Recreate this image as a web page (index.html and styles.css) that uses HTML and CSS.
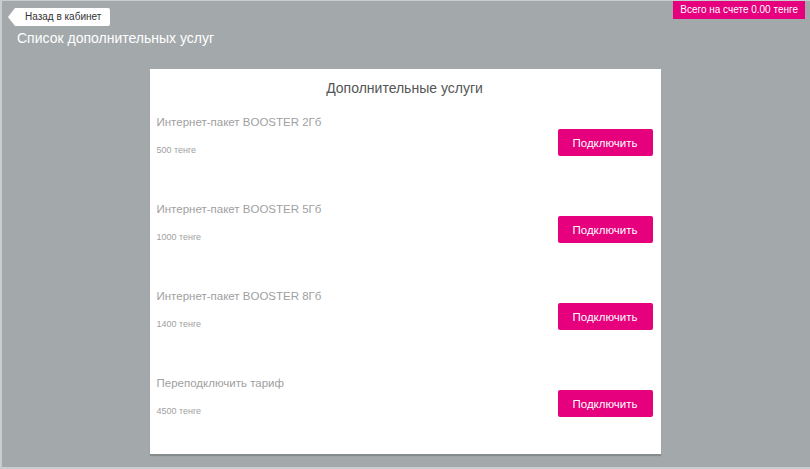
FILE: index.html
```html
<!DOCTYPE html>
<html lang="ru">
<head>
<meta charset="utf-8">
<title>Дополнительные услуги</title>
<link rel="stylesheet" href="styles.css">
</head>
<body>
<div class="frame">
  <header class="topbar">
    <div class="topbar-left">
      <a class="back-btn" href="#">Назад в кабинет</a>
      <h1 class="page-title">Список дополнительных услуг</h1>
    </div>
    <div class="balance">Всего на счете 0.00 тенге</div>
  </header>
  <main class="card">
    <h2 class="card-title">Дополнительные услуги</h2>
    <div class="rows">
      <div class="row">
        <div class="info">
          <div class="name">Интернет-пакет BOOSTER 2Гб</div>
          <div class="price">500 тенге</div>
        </div>
        <button class="connect">Подключить</button>
      </div>
      <div class="row">
        <div class="info">
          <div class="name">Интернет-пакет BOOSTER 5Гб</div>
          <div class="price">1000 тенге</div>
        </div>
        <button class="connect">Подключить</button>
      </div>
      <div class="row">
        <div class="info">
          <div class="name">Интернет-пакет BOOSTER 8Гб</div>
          <div class="price">1400 тенге</div>
        </div>
        <button class="connect">Подключить</button>
      </div>
      <div class="row">
        <div class="info">
          <div class="name">Переподключить тариф</div>
          <div class="price">4500 тенге</div>
        </div>
        <button class="connect">Подключить</button>
      </div>
    </div>
  </main>
</div>
</body>
</html>
```

FILE: styles.css
```css
* { box-sizing: border-box; }
html, body {
  margin: 0;
  padding: 0;
  width: 810px;
  height: 469px;
  overflow: hidden;
  background: #c9cdce;
  font-family: "Liberation Sans", Arial, sans-serif;
}
.frame {
  width: 808px;
  height: 466px;
  margin: 1px 0 0 2px;
  background: #a3a9ab;
  display: flex;
  flex-direction: column;
  align-items: center;
}
.topbar {
  width: 100%;
  display: flex;
  justify-content: space-between;
  align-items: flex-start;
  height: 68px;
}
.topbar-left {
  display: flex;
  flex-direction: column;
  align-items: flex-start;
  padding: 7px 0 0 6px;
}
.back-btn {
  position: relative;
  display: block;
  margin-left: 7px;
  height: 18px;
  line-height: 18px;
  padding: 0 9px 0 10px;
  background: #fff;
  color: #333;
  font-size: 10px;
  text-decoration: none;
  border-radius: 0 2px 2px 0;
}
.back-btn::before {
  content: "";
  position: absolute;
  left: -7px;
  top: 0;
  border-top: 9px solid transparent;
  border-bottom: 9px solid transparent;
  border-right: 7px solid #fff;
}
.page-title {
  margin: 3px 0 0 9px;
  font-size: 14px;
  font-weight: normal;
  color: #fff;
  line-height: 18px;
}
.balance {
  margin: 0 5px 0 0;
  background: #e6007e;
  color: #fff;
  font-size: 10px;
  height: 18px;
  line-height: 18px;
  padding: 0 7px;
}
.card {
  width: 511px;
  margin-right: 2px;
  background: #fff;
  padding: 8px 8px 37px 7px;
  box-shadow: 0 2px 1px rgba(0,0,0,0.18);
}
.card-title {
  margin: 0;
  text-align: center;
  font-size: 14px;
  font-weight: normal;
  color: #555;
  line-height: 22px;
}
.rows {
  margin-top: 15px;
  display: flex;
  flex-direction: column;
  gap: 45px;
}
.row {
  display: flex;
  justify-content: space-between;
  align-items: flex-start;
  height: 42px;
}
.name {
  font-size: 11.5px;
  line-height: 16px;
  color: #a0a0a0;
}
.price {
  margin-top: 14px;
  font-size: 9px;
  line-height: 12px;
  color: #a0a0a0;
}
.connect {
  margin-top: 15px;
  width: 95px;
  height: 27px;
  border: none;
  border-radius: 2px;
  background: #e6007e;
  color: #fff;
  font-family: "Liberation Sans", Arial, sans-serif;
  font-size: 11.5px;
  cursor: pointer;
}
```
